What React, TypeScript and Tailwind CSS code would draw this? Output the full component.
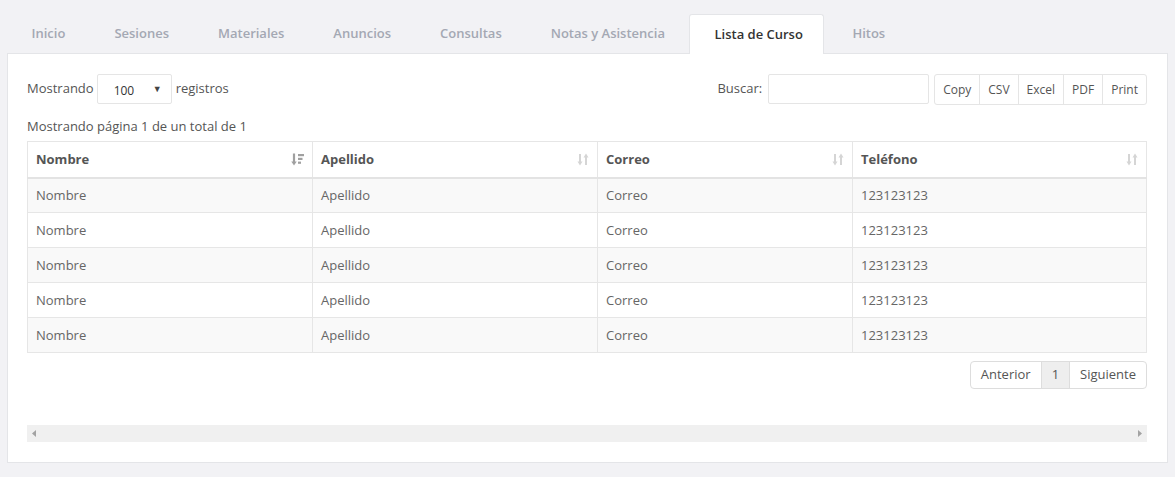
import React from "react";

const tabs = ["Inicio", "Sesiones", "Materiales", "Anuncios", "Consultas", "Notas y Asistencia", "Lista de Curso", "Hitos"];

function SortBoth() {
  return (
    <svg width="12" height="13" viewBox="0 0 12 13" className="text-[#d5d5d5]">
      <path d="M3 1v8" stroke="currentColor" strokeWidth="2" />
      <path d="M0.5 8.5l2.5 4 2.5-4z" fill="currentColor" />
      <path d="M9 12V4" stroke="currentColor" strokeWidth="2" />
      <path d="M6.5 4.5l2.5-4 2.5 4z" fill="currentColor" />
    </svg>
  );
}

function SortDesc() {
  return (
    <svg width="13" height="13" viewBox="0 0 13 13" className="text-[#a0a0a0]">
      <path d="M3 0.5v8.5" stroke="currentColor" strokeWidth="2.2" />
      <path d="M0.3 8.5l2.7 4 2.7-4z" fill="currentColor" />
      <rect x="7" y="1" width="6" height="2.2" fill="currentColor" />
      <rect x="7" y="4.8" width="4.5" height="2.2" fill="currentColor" />
      <rect x="7" y="8.6" width="3" height="2.2" fill="currentColor" />
    </svg>
  );
}

export default function App() {
  const rows = [0, 1, 2, 3, 4];
  const cols = [
    { name: "Nombre", w: "w-[285px]", icon: <SortDesc /> },
    { name: "Apellido", w: "w-[285px]", icon: <SortBoth /> },
    { name: "Correo", w: "w-[255px]", icon: <SortBoth /> },
    { name: "Teléfono", w: "", icon: <SortBoth /> },
  ];
  const vals = ["Nombre", "Apellido", "Correo", "123123123"];
  return (
    <div className="w-[1175px] h-[477px] bg-[#f2f2f5] pt-[14px] px-[7px] text-[13px] text-[#555]" style={{ fontFamily: '"Open Sans", sans-serif' }}>
      <div className="flex h-[39px]">
        {tabs.map((t) => {
          const active = t === "Lista de Curso";
          const last = t === "Hitos";
          return (
            <div
              key={t}
              className={
                active
                  ? "pl-[24px] pr-[20px] h-[40px] flex items-center bg-white border border-[#e4e5e8] border-b-0 rounded-t-[3px] text-[#333] font-semibold relative z-10"
                  : last
                  ? "pl-[28.5px] pr-[24.5px] h-[39px] flex items-center text-[#a4a8b3] font-semibold"
                  : "px-[24.5px] h-[39px] flex items-center text-[#a4a8b3] font-semibold"
              }
            >
              <span className="mt-[1px]">{t}</span>
            </div>
          );
        })}
      </div>
      <div className="bg-white border border-[#e4e5e8] h-[410px] pl-[19px] pr-[20px] pt-[20px]">
        <div className="flex items-center justify-between h-[30px]">
          <div className="flex items-center text-[#555]">
            <span>Mostrando</span>
            <div className="ml-[3px] w-[75px] h-[30px] border border-[#e5e5e5] rounded-[2px] flex items-center justify-between pl-[16px] pr-[9px]">
              <span className="text-[12px] text-[#333] mt-[4px]">100</span>
              <span className="text-[9px] text-[#444]">▼</span>
            </div>
            <span className="ml-[4px]">registros</span>
          </div>
          <div className="flex items-center">
            <span className="mr-[6px]">Buscar:</span>
            <div className="w-[161px] h-[30px] border border-[#e5e5e5] rounded-[2px]"></div>
            <div className="ml-[5px] flex h-[31px] border border-[#e5e5e5] rounded-[3px] text-[12px] text-[#555]">
              {["Copy", "CSV", "Excel", "PDF", "Print"].map((b, i) => (
                <div key={b} className={"flex items-center px-[8px] " + (i > 0 ? "border-l border-[#e5e5e5]" : "")}>
                  <span className="mt-[2px]">{b}</span>
                </div>
              ))}
            </div>
          </div>
        </div>
        <div className="mt-[10px] h-[26px] flex items-center">Mostrando página 1 de un total de 1</div>
        <table className="w-full border-collapse border border-[#e6e6e6] mt-[1px]">
          <thead>
            <tr className="h-[36px] border-b-2 border-[#e3e3e3]">
              {cols.map((c) => (
                <th key={c.name} className={"text-left font-bold text-[#555] px-[8px] border-r border-[#e6e6e6] " + c.w}>
                  <div className="flex items-center justify-between">
                    <span>{c.name}</span>
                    {c.icon}
                  </div>
                </th>
              ))}
            </tr>
          </thead>
          <tbody>
            {rows.map((r) => (
              <tr key={r} className={"h-[35px] border-t border-[#e6e6e6] " + (r % 2 === 0 ? "bg-[#f9f9f9]" : "bg-white")}>
                {vals.map((v, i) => (
                  <td key={i} className="px-[8px] pt-[1px] border-r border-[#e6e6e6] text-[#666]">{v}</td>
                ))}
              </tr>
            ))}
          </tbody>
        </table>
        <div className="flex justify-end mt-[8px]">
          <div className="flex h-[28px] border border-[#dddddd] rounded-[4px] text-[#555]">
            <div className="px-[10px] flex items-center">Anterior</div>
            <div className="px-[10px] flex items-center bg-[#eeeeee] border-l border-r border-[#dddddd]">1</div>
            <div className="px-[10px] flex items-center">Siguiente</div>
          </div>
        </div>
        <div className="mt-[36px] h-[17px] bg-[#f0f0f0] flex items-center justify-between px-[5px]">
          <svg width="4" height="7" viewBox="0 0 4 7"><path d="M4 0v7L0 3.5z" fill="#a3a3a3" /></svg>
          <svg width="4" height="7" viewBox="0 0 4 7"><path d="M0 0v7l4-3.5z" fill="#a3a3a3" /></svg>
        </div>
      </div>
    </div>
  );
}
